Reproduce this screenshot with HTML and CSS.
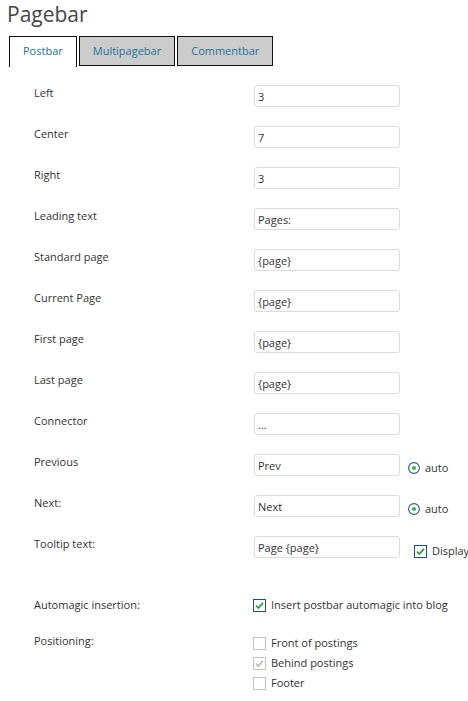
FILE: index.html
```html
<!DOCTYPE html>
<html lang="en">
<head>
<meta charset="utf-8">
<title>Pagebar</title>
<link rel="stylesheet" href="styles.css">
</head>
<body>
<h1 class="title">Pagebar</h1>
<ul class="tabs">
  <li class="tab active">Postbar</li>
  <li class="tab">Multipagebar</li>
  <li class="tab">Commentbar</li>
</ul>
<div class="form">
  <div class="row"><div class="label">Left</div><div class="field"><input class="input" type="text" value="3"></div></div>
  <div class="row"><div class="label">Center</div><div class="field"><input class="input" type="text" value="7"></div></div>
  <div class="row"><div class="label">Right</div><div class="field"><input class="input" type="text" value="3"></div></div>
  <div class="row"><div class="label">Leading text</div><div class="field"><input class="input" type="text" value="Pages:"></div></div>
  <div class="row"><div class="label">Standard page</div><div class="field"><input class="input" type="text" value="{page}"></div></div>
  <div class="row"><div class="label">Current Page</div><div class="field"><input class="input" type="text" value="{page}"></div></div>
  <div class="row"><div class="label">First page</div><div class="field"><input class="input" type="text" value="{page}"></div></div>
  <div class="row"><div class="label">Last page</div><div class="field"><input class="input" type="text" value="{page}"></div></div>
  <div class="row"><div class="label">Connector</div><div class="field"><input class="input" type="text" value="..."></div></div>
  <div class="row"><div class="label">Previous</div><div class="field"><input class="input" type="text" value="Prev">
    <span class="opt radio-opt"><svg class="icon" width="12" height="12" viewBox="0 0 12 12"><circle cx="6" cy="6" r="5.4" fill="#fff" stroke="#2c5b8c" stroke-width="1.1"/><circle cx="6" cy="6" r="2" fill="#3cb043"/></svg>auto</span></div></div>
  <div class="row"><div class="label">Next:</div><div class="field"><input class="input" type="text" value="Next">
    <span class="opt radio-opt"><svg class="icon" width="12" height="12" viewBox="0 0 12 12"><circle cx="6" cy="6" r="5.4" fill="#fff" stroke="#2c5b8c" stroke-width="1.1"/><circle cx="6" cy="6" r="2" fill="#3cb043"/></svg>auto</span></div></div>
  <div class="row"><div class="label">Tooltip text:</div><div class="field"><input class="input" type="text" value="Page {page}">
    <span class="opt display-opt"><svg class="icon" width="13" height="13" viewBox="0 0 13 13"><rect x="0.5" y="0.5" width="12" height="12" fill="#fff" stroke="#1f4f7f"/><path d="M3 6.5 L5.3 9 L10 3.8" fill="none" stroke="#2e9e2e" stroke-width="1.8"/></svg>Display</span></div></div>

  <div class="row sep auto"><div class="label">Automagic insertion:</div><div class="field">
    <span class="opt cb-opt"><svg class="icon" width="13" height="13" viewBox="0 0 13 13"><rect x="0.5" y="0.5" width="12" height="12" fill="#fff" stroke="#1f4f7f"/><path d="M3 6.5 L5.3 9 L10 3.8" fill="none" stroke="#2e9e2e" stroke-width="1.8"/></svg>Insert postbar automagic into blog</span></div></div>
  <div class="row"><div class="label">Positioning:</div><div class="field opts">
    <span class="opt cb-opt line"><svg class="icon" width="13" height="13" viewBox="0 0 13 13"><rect x="0.5" y="0.5" width="12" height="12" fill="#fff" stroke="#c4c4c4"/></svg>Front of postings</span>
    <span class="opt cb-opt line"><svg class="icon" width="13" height="13" viewBox="0 0 13 13"><rect x="0.5" y="0.5" width="12" height="12" fill="#fff" stroke="#c4c4c4"/><path d="M3 6.5 L5.3 9 L10 3.8" fill="none" stroke="#b8b8b8" stroke-width="1.6"/></svg>Behind postings</span>
    <span class="opt cb-opt line"><svg class="icon" width="13" height="13" viewBox="0 0 13 13"><rect x="0.5" y="0.5" width="12" height="12" fill="#fff" stroke="#c4c4c4"/></svg>Footer</span>
  </div></div>
</div>
</body>
</html>
```

FILE: styles.css
```css
html {
  overflow: hidden;
}

body {
  margin: 0;
  font-family: "Open Sans", "Noto Sans", sans-serif;
  font-size: 11px;
  color: #333;
  background: #fff;
}

.title {
  margin: 0;
  padding-left: 7px;
  font-size: 21px;
  font-weight: normal;
  line-height: 28px;
  color: #464646;
}

.tabs {
  list-style: none;
  margin: 8px 0 0;
  padding: 0 0 0 9px;
  display: flex;
  align-items: flex-start;
  gap: 2px;
}

.tab {
  box-sizing: border-box;
  height: 30px;
  padding: 0 13px;
  line-height: 28px;
  border: 1px solid #111;
  background: #cccccc;
  color: #21759b;
}

.tab.active {
  height: 31px;
  border-bottom: none;
  background: #fff;
}

.form {
  padding-left: 34px;
  margin-top: 18px;
}

.row {
  display: flex;
  margin-bottom: 19px;
}

.row.sep {
  margin-top: 38px;
}

.row.auto {
  margin-bottom: 20px;
}

.label {
  flex: none;
  width: 220px;
  line-height: 16px;
}

.field {
  display: flex;
  align-items: flex-start;
  white-space: nowrap;
}

.input {
  box-sizing: border-box;
  width: 146px;
  height: 22px;
  margin: 0;
  padding: 0 3px;
  border: 1px solid #dcdcdc;
  border-radius: 3px;
  font-family: "Open Sans", "Noto Sans", sans-serif;
  font-size: 11px;
  color: #333;
  background: #fff;
  outline: none;
}

.opt {
  display: flex;
  align-items: center;
  gap: 5px;
  line-height: 16px;
}

.icon {
  flex: none;
  display: block;
}

.radio-opt {
  margin-left: 8px;
  margin-top: 6px;
}

.display-opt {
  margin-left: 14px;
  margin-top: 7px;
}

.cb-opt {
  margin-left: -1px;
}

.opts {
  flex-direction: column;
}

.opt.line {
  line-height: 20px;
}
```
